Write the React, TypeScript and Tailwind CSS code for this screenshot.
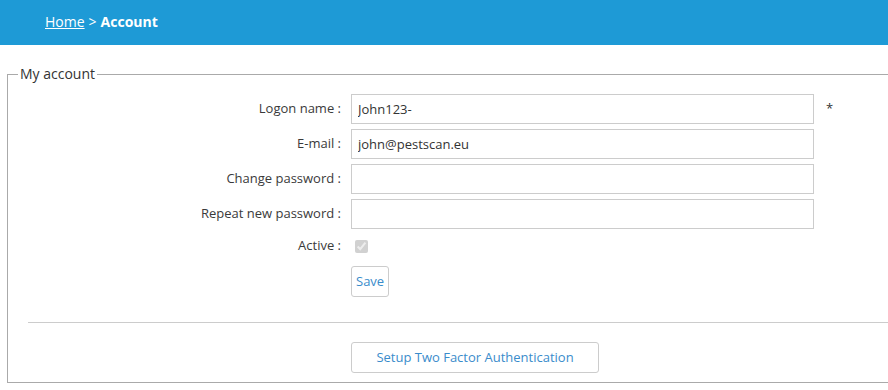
import React from 'react';

const font = { fontFamily: '"Open Sans", "Liberation Sans", sans-serif' };

function Row({ label, children, extra }: { label: string; children: React.ReactNode; extra?: React.ReactNode }) {
    return (
        <>
            <div className="flex items-center justify-end h-[30px] text-[13px] text-[#3a3a3a]">{label} :</div>
            <div className="h-[30px]">{children}</div>
            <div className="flex items-center h-[30px] pl-[2px] text-[13px] text-[#333]">{extra}</div>
        </>
    );
}

export default function App() {
    const inputCls = 'w-[463px] h-[30px] border border-[#ccc] px-[6px] text-[13px] text-[#333] outline-none bg-white';

    return (
        <div className="w-[888px] h-[390px] overflow-hidden bg-white" style={font}>
            <div className="h-[45px] bg-[#1e9ad6] flex items-center pl-[45px] pb-[2px] text-[14px] text-white">
                <a href="#" className="underline">Home</a>
                <span className="ml-1">&gt;</span>
                <span className="ml-1 font-bold">Account</span>
            </div>

            <fieldset className="mt-[20px] ml-[7px] w-[900px] h-[318px] border border-[#aaa]">
                <legend className="ml-[10px] px-[2px] text-[14px] text-[#333] leading-[18px]">My account</legend>

                <div className="grid grid-cols-[333px_463px_auto] gap-x-[10px] gap-y-[5px] mt-[11px]">
                    <Row label="Logon name" extra="*">
                        <input className={inputCls} defaultValue="John123-" />
                    </Row>
                    <Row label="E-mail">
                        <input className={inputCls} defaultValue="john@pestscan.eu" />
                    </Row>
                    <Row label="Change password">
                        <input type="password" className={inputCls} />
                    </Row>
                    <Row label="Repeat new password">
                        <input type="password" className={inputCls} />
                    </Row>
                    <div className="flex items-center justify-end h-[24px] text-[13px] text-[#3a3a3a]">Active :</div>
                    <div className="flex items-center h-[24px] pl-[4px]">
                        <input type="checkbox" checked disabled readOnly className="w-[13px] h-[13px]" />
                    </div>
                    <div />
                    <div />
                    <div className="pt-[3px]">
                        <button className="h-[31px] px-[4px] border border-[#ccc] rounded-[3px] text-[13px] text-[#3a8ccb] bg-white">Save</button>
                    </div>
                    <div />
                </div>

                <div className="mt-[25px] ml-[20px] border-t border-[#ccc]" />

                <div className="mt-[19px] pl-[343px]">
                    <button className="h-[31px] w-[248px] border border-[#ccc] rounded-[3px] text-[13px] text-[#3a8ccb] bg-white">
                        Setup Two Factor Authentication
                    </button>
                </div>
            </fieldset>
        </div>
    );
}
